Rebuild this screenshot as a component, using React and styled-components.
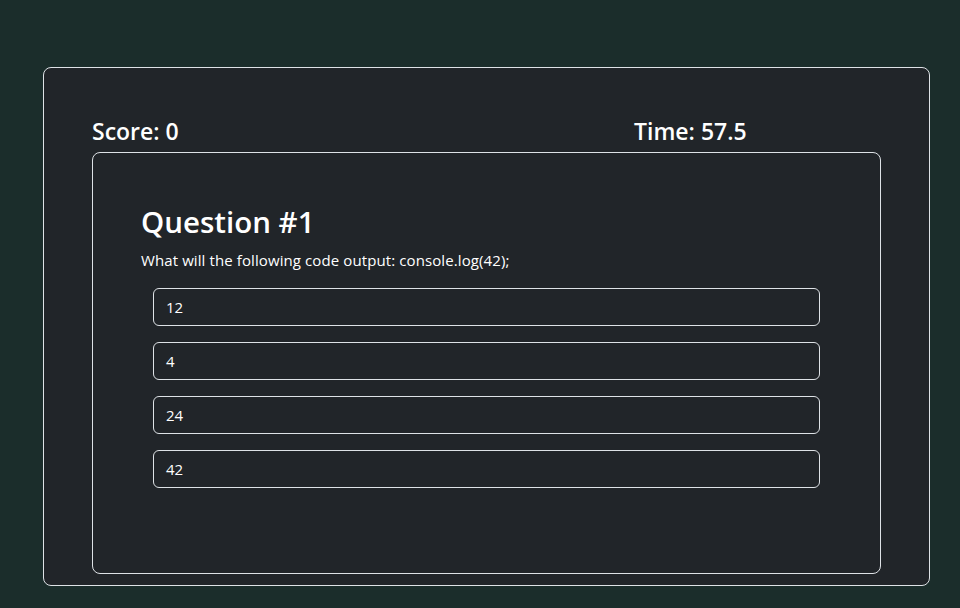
import React from 'react';
import styled, { createGlobalStyle } from 'styled-components';

const GlobalStyle = createGlobalStyle`
  html, body {
    margin: 0;
    padding: 0;
    background: #1b2d2b;
    color: #fff;
    font-family: "Open Sans", "Noto Sans", sans-serif;
  }
  * { box-sizing: border-box; }
`;

const Page = styled.div`
  width: 960px;
  height: 608px;
  padding: 67px 30px 22px 43px;
`;

const OuterCard = styled.div`
  width: 887px;
  height: 519px;
  background: #212529;
  border: 1px solid #dee2e6;
  border-radius: 8px;
  padding: 47px 48px 11px 48px;
  display: flex;
  flex-direction: column;
`;

const ScoreRow = styled.div`
  display: grid;
  grid-template-columns: 542px 1fr;
  height: 37px;
`;

const Stat = styled.h4`
  margin: 0;
  font-size: 23px;
  font-weight: 600;
  line-height: 32px;
`;

const QuestionCard = styled.div`
  flex: 1;
  border: 1px solid #dee2e6;
  border-radius: 8px;
  padding: 49px 48px;
`;

const Heading = styled.h2`
  margin: 0 0 6px;
  font-size: 29.5px;
  font-weight: 600;
  line-height: 40px;
`;

const Prompt = styled.p`
  margin: 0 0 16px;
  font-size: 15px;
  letter-spacing: 0.1px;
  line-height: 24px;
`;

const Options = styled.div`
  display: flex;
  flex-direction: column;
  gap: 16px;
  margin: 0 12px;
`;

const Option = styled.button`
  height: 38px;
  padding: 0 12px;
  text-align: left;
  background: #212529;
  color: #fff;
  border: 1px solid #dee2e6;
  border-radius: 6px;
  font-family: inherit;
  font-size: 15px;
`;

const answers = ['12', '4', '24', '42'];

export default function App() {
  return (
    <>
      <GlobalStyle />
      <Page>
        <OuterCard>
          <ScoreRow>
            <Stat>Score: 0</Stat>
            <Stat>Time: 57.5</Stat>
          </ScoreRow>
          <QuestionCard>
            <Heading>Question #1</Heading>
            <Prompt>What will the following code output: console.log(42);</Prompt>
            <Options>
              {answers.map((a) => (
                <Option key={a} type="button">{a}</Option>
              ))}
            </Options>
          </QuestionCard>
        </OuterCard>
      </Page>
    </>
  );
}
